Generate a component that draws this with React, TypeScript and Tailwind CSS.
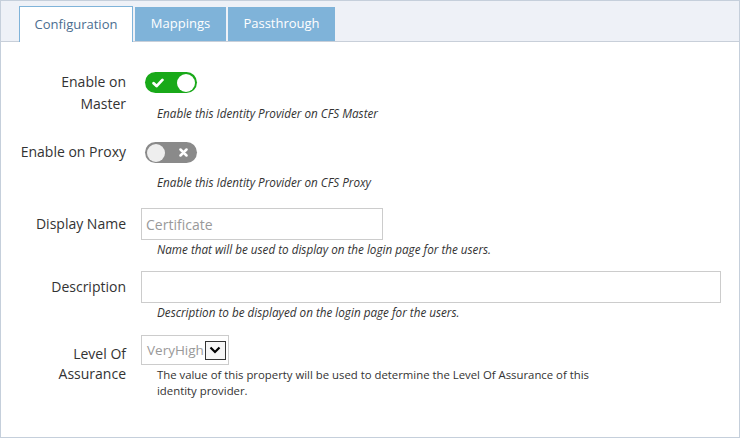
import React from "react";

const font = { fontFamily: '"Open Sans", "Noto Sans", Arial, sans-serif' };

function Toggle({ on }: { on: boolean }) {
  if (on) {
    return (
      <div className="ml-[4px] flex h-[21px] w-[52px] items-center justify-between rounded-full bg-[#19a919] pl-[7px] pr-[2px]">
        <svg width="12" height="10" viewBox="0 0 12 10">
          <path d="M1.6 5.2 L4.6 8.1 L10.4 1.9" stroke="#fff" strokeWidth="2.8" fill="none" strokeLinecap="round" strokeLinejoin="round" />
        </svg>
        <div className="h-[18px] w-[18px] rounded-full bg-white" />
      </div>
    );
  }
  return (
    <div className="ml-[4px] flex h-[21px] w-[52px] items-center justify-between rounded-full bg-[#8a8a8a] pl-[2px] pr-[9px]">
      <div className="h-[18px] w-[18px] rounded-full bg-[#eeeeee]" />
      <svg width="9" height="9" viewBox="0 0 9 9">
        <path d="M1.5 1.5 L7.5 7.5 M7.5 1.5 L1.5 7.5" stroke="#fff" strokeWidth="2.5" strokeLinecap="round" />
      </svg>
    </div>
  );
}

function Help({ children, italic = true, className = "" }: { children: React.ReactNode; italic?: boolean; className?: string }) {
  return (
    <div className={`ml-[16px] leading-[16px] text-[#333] ${italic ? "text-[11.7px] italic" : "text-[11.35px]"} ${className}`}>
      {children}
    </div>
  );
}

export default function App() {
  return (
    <div style={font} className="box-border h-[438px] w-[740px] overflow-hidden border border-[#c5cfdb] bg-white text-[#333]">
      <div className="flex h-[41px] items-end border-b border-[#c8cfd9] bg-[#eef1f7] pl-[18px]">
        <div className="-mb-px flex h-[36px] w-[114px] items-center justify-center border border-b-0 border-[#7fb3d9] bg-white text-[13px] text-[#4b6d8f]">
          Configuration
        </div>
        <div className="ml-[2px] flex h-[34px] w-[91px] items-center justify-center bg-[#7fb3d9] text-[13px] text-white">
          Mappings
        </div>
        <div className="ml-[2px] flex h-[34px] w-[107px] items-center justify-center bg-[#7fb3d9] text-[13px] text-white">
          Passthrough
        </div>
      </div>

      <div className="flex flex-col text-[14px]">
        {/* Row 1 */}
        <div className="mt-[29px] flex">
          <div className="w-[125px] pl-[15px] text-right leading-[22px]">Enable on Master</div>
          <div className="ml-[15px] flex flex-col pt-[1px]">
            <Toggle on={true} />
            <Help className="mt-[12px]">Enable this Identity Provider on CFS Master</Help>
          </div>
        </div>

        {/* Row 2 */}
        <div className="mt-[20px] flex">
          <div className="w-[125px] pl-[15px] text-right leading-[22px]">Enable on Proxy</div>
          <div className="ml-[15px] flex flex-col pt-[1px]">
            <Toggle on={false} />
            <Help className="mt-[11px]">Enable this Identity Provider on CFS Proxy</Help>
          </div>
        </div>

        {/* Row 3 */}
        <div className="mt-[18px] flex">
          <div className="w-[125px] pl-[15px] text-right leading-[32px]">Display Name</div>
          <div className="ml-[15px] flex flex-col">
            <div className="flex h-[32px] w-[242px] items-center border border-[#cccccc] bg-white px-[4px] text-[14px] text-[#999]">
              Certificate
            </div>
            <Help className="mt-[1px]">Name that will be used to display on the login page for the users.</Help>
          </div>
        </div>

        {/* Row 4 */}
        <div className="mt-[14px] flex">
          <div className="w-[125px] pl-[15px] text-right leading-[32px]">Description</div>
          <div className="ml-[15px] flex flex-col">
            <div className="h-[32px] w-[580px] border border-[#cccccc] bg-white" />
            <Help className="mt-[1px]">Description to be displayed on the login page for the users.</Help>
          </div>
        </div>

        {/* Row 5 */}
        <div className="mt-[15px] flex">
          <div className="w-[125px] pl-[15px] pt-[9px] text-right leading-[20px]">Level Of Assurance</div>
          <div className="ml-[15px] flex flex-col">
            <div className="flex h-[30px] w-[88px] items-center border border-[#cccccc] bg-white pl-[5px] text-[13.5px] text-[#999]">
              <span>VeryHigh</span>
              <div className="ml-[1px] flex h-[19px] w-[21px] items-center justify-center border border-[#333] bg-[#f6f6f6]">
                <svg width="12" height="8" viewBox="0 0 12 8">
                  <path d="M1.5 1.5 L6 6 L10.5 1.5" stroke="#000" strokeWidth="2.2" fill="none" />
                </svg>
              </div>
            </div>
            <Help italic={false} className="mt-[2px] w-[440px]">
              The value of this property will be used to determine the Level Of Assurance of this identity provider.
            </Help>
          </div>
        </div>
      </div>
    </div>
  );
}
